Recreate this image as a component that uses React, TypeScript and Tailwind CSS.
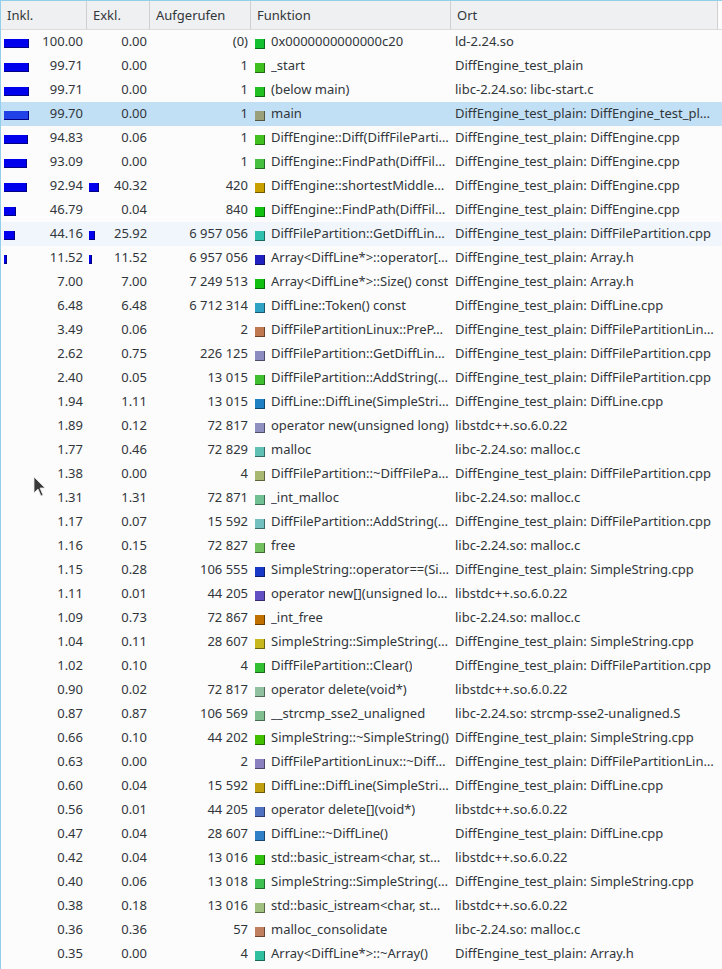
import React from "react";

type Row = {
  incl: number;
  excl: number;
  calls: string;
  fn: string;
  loc: string;
  color: string;
};

const rows: Row[] = [
  { incl: 100.0, excl: 0.0, calls: "(0)", fn: "0x0000000000000c20", loc: "ld-2.24.so", color: "#12c030" },
  { incl: 99.71, excl: 0.0, calls: "1", fn: "_start", loc: "DiffEngine_test_plain", color: "#3fc020" },
  { incl: 99.71, excl: 0.0, calls: "1", fn: "(below main)", loc: "libc-2.24.so: libc-start.c", color: "#22c022" },
  { incl: 99.7, excl: 0.0, calls: "1", fn: "main", loc: "DiffEngine_test_plain: DiffEngine_test_pl…", color: "#9aa07a" },
  { incl: 94.83, excl: 0.06, calls: "1", fn: "DiffEngine::Diff(DiffFileParti…", loc: "DiffEngine_test_plain: DiffEngine.cpp", color: "#42c022" },
  { incl: 93.09, excl: 0.0, calls: "1", fn: "DiffEngine::FindPath(DiffFil…", loc: "DiffEngine_test_plain: DiffEngine.cpp", color: "#46c03e" },
  { incl: 92.94, excl: 40.32, calls: "420", fn: "DiffEngine::shortestMiddle…", loc: "DiffEngine_test_plain: DiffEngine.cpp", color: "#c8a000" },
  { incl: 46.79, excl: 0.04, calls: "840", fn: "DiffEngine::FindPath(DiffFil…", loc: "DiffEngine_test_plain: DiffEngine.cpp", color: "#12c012" },
  { incl: 44.16, excl: 25.92, calls: "6 957 056", fn: "DiffFilePartition::GetDiffLin…", loc: "DiffEngine_test_plain: DiffFilePartition.cpp", color: "#30c0b0" },
  { incl: 11.52, excl: 11.52, calls: "6 957 056", fn: "Array<DiffLine*>::operator[…", loc: "DiffEngine_test_plain: Array.h", color: "#2020c0" },
  { incl: 7.0, excl: 7.0, calls: "7 249 513", fn: "Array<DiffLine*>::Size() const", loc: "DiffEngine_test_plain: Array.h", color: "#12c012" },
  { incl: 6.48, excl: 6.48, calls: "6 712 314", fn: "DiffLine::Token() const", loc: "DiffEngine_test_plain: DiffLine.cpp", color: "#30a2c4" },
  { incl: 3.49, excl: 0.06, calls: "2", fn: "DiffFilePartitionLinux::PreP…", loc: "DiffEngine_test_plain: DiffFilePartitionLin…", color: "#c07850" },
  { incl: 2.62, excl: 0.75, calls: "226 125", fn: "DiffFilePartition::GetDiffLin…", loc: "DiffEngine_test_plain: DiffFilePartition.cpp", color: "#8c8cc0" },
  { incl: 2.4, excl: 0.05, calls: "13 015", fn: "DiffFilePartition::AddString(…", loc: "DiffEngine_test_plain: DiffFilePartition.cpp", color: "#40c030" },
  { incl: 1.94, excl: 1.11, calls: "13 015", fn: "DiffLine::DiffLine(SimpleStri…", loc: "DiffEngine_test_plain: DiffLine.cpp", color: "#2080c4" },
  { incl: 1.89, excl: 0.12, calls: "72 817", fn: "operator new(unsigned long)", loc: "libstdc++.so.6.0.22", color: "#9090c0" },
  { incl: 1.77, excl: 0.46, calls: "72 829", fn: "malloc", loc: "libc-2.24.so: malloc.c", color: "#60c0b4" },
  { incl: 1.38, excl: 0.0, calls: "4", fn: "DiffFilePartition::~DiffFilePa…", loc: "DiffEngine_test_plain: DiffFilePartition.cpp", color: "#a8b870" },
  { incl: 1.31, excl: 1.31, calls: "72 871", fn: "_int_malloc", loc: "libc-2.24.so: malloc.c", color: "#70c094" },
  { incl: 1.17, excl: 0.07, calls: "15 592", fn: "DiffFilePartition::AddString(…", loc: "DiffEngine_test_plain: DiffFilePartition.cpp", color: "#72c0c0" },
  { incl: 1.16, excl: 0.15, calls: "72 827", fn: "free", loc: "libc-2.24.so: malloc.c", color: "#72c060" },
  { incl: 1.15, excl: 0.28, calls: "106 555", fn: "SimpleString::operator==(Si…", loc: "DiffEngine_test_plain: SimpleString.cpp", color: "#1838c8" },
  { incl: 1.11, excl: 0.01, calls: "44 205", fn: "operator new[](unsigned lo…", loc: "libstdc++.so.6.0.22", color: "#6050c4" },
  { incl: 1.09, excl: 0.73, calls: "72 867", fn: "_int_free", loc: "libc-2.24.so: malloc.c", color: "#c07000" },
  { incl: 1.04, excl: 0.11, calls: "28 607", fn: "SimpleString::SimpleString(…", loc: "DiffEngine_test_plain: SimpleString.cpp", color: "#c8b820" },
  { incl: 1.02, excl: 0.1, calls: "4", fn: "DiffFilePartition::Clear()", loc: "DiffEngine_test_plain: DiffFilePartition.cpp", color: "#32c032" },
  { incl: 0.9, excl: 0.02, calls: "72 817", fn: "operator delete(void*)", loc: "libstdc++.so.6.0.22", color: "#90c0a0" },
  { incl: 0.87, excl: 0.87, calls: "106 569", fn: "__strcmp_sse2_unaligned", loc: "libc-2.24.so: strcmp-sse2-unaligned.S", color: "#80c090" },
  { incl: 0.66, excl: 0.1, calls: "44 202", fn: "SimpleString::~SimpleString()", loc: "DiffEngine_test_plain: SimpleString.cpp", color: "#42c000" },
  { incl: 0.63, excl: 0.0, calls: "2", fn: "DiffFilePartitionLinux::~Diff…", loc: "DiffEngine_test_plain: DiffFilePartitionLin…", color: "#8a80c0" },
  { incl: 0.6, excl: 0.04, calls: "15 592", fn: "DiffLine::DiffLine(SimpleStri…", loc: "DiffEngine_test_plain: DiffLine.cpp", color: "#c0a010" },
  { incl: 0.56, excl: 0.01, calls: "44 205", fn: "operator delete[](void*)", loc: "libstdc++.so.6.0.22", color: "#5070c0" },
  { incl: 0.47, excl: 0.04, calls: "28 607", fn: "DiffLine::~DiffLine()", loc: "DiffEngine_test_plain: DiffLine.cpp", color: "#3080c8" },
  { incl: 0.42, excl: 0.04, calls: "13 016", fn: "std::basic_istream<char, st…", loc: "libstdc++.so.6.0.22", color: "#30c010" },
  { incl: 0.4, excl: 0.06, calls: "13 018", fn: "SimpleString::SimpleString(…", loc: "DiffEngine_test_plain: SimpleString.cpp", color: "#40c050" },
  { incl: 0.38, excl: 0.18, calls: "13 016", fn: "std::basic_istream<char, st…", loc: "libstdc++.so.6.0.22", color: "#a0c080" },
  { incl: 0.36, excl: 0.36, calls: "57", fn: "malloc_consolidate", loc: "libc-2.24.so: malloc.c", color: "#c08060" },
  { incl: 0.35, excl: 0.0, calls: "4", fn: "Array<DiffLine*>::~Array()", loc: "DiffEngine_test_plain: Array.h", color: "#30c0a0" },
];

const SELECTED = 3;
const HOVER = 8;

// cost bar, 25px == 100%
function Bar({ pct, selected }: { pct: number; selected?: boolean }) {
  if (pct < 10) return <span className="w-[25px] shrink-0" />;
  const w = Math.max(3, Math.round((pct / 100) * 25));
  return (
    <span className="w-[25px] shrink-0 flex items-center">
      <span
        className={`h-[9px] mt-[2px] border-r border-b border-[#000080] ${selected ? "bg-[#2040e8]" : "bg-[#0000ec]"}`}
        style={{ width: w }}
      />
    </span>
  );
}

const fmt = (n: number) => n.toFixed(2);

export default function App() {
  return (
    <div
      className="relative w-[722px] h-[969px] overflow-hidden bg-[#fcfcfc] border-l border-t border-[#93cfea] text-[13px] text-[#31363b]"
      style={{ fontFamily: '"Noto Sans", "Open Sans", sans-serif' }}
    >
      {/* Header */}
      <div className="grid grid-cols-[86px_63px_101px_200px_267px] h-[29px] border-b border-[#dcdcdc]">
        {["Inkl.", "Exkl.", "Aufgerufen", "Funktion", "Ort"].map((h) => (
          <div key={h} className="flex items-center pt-[2px] pl-[6px] bg-[#eff0f1] border-r border-[#cfd0d1]">
            {h}
          </div>
        ))}
      </div>

      {/* Rows */}
      <div className="flex flex-col">
        {rows.map((r, i) => {
          const sel = i === SELECTED;
          return (
            <div
              key={i}
              className={`grid grid-cols-[86px_63px_101px_200px_267px] h-[24px] items-center whitespace-nowrap ${
                sel ? "bg-[#c2e0f5]" : i === HOVER ? "bg-[#f0f6fb]" : ""
              }`}
            >
              <div className="flex items-center pl-[3px] pr-[4px]">
                <Bar pct={r.incl} selected={sel} />
                <span className="ml-auto">{fmt(r.incl)}</span>
              </div>
              <div className="flex items-center pl-[2px] pr-[3px]">
                <Bar pct={r.excl} selected={sel} />
                <span className="ml-auto">{fmt(r.excl)}</span>
              </div>
              <div className="text-right pr-[3px]">{r.calls}</div>
              <div className="flex items-center pl-[4px] overflow-hidden">
                <span
                  className="w-[10px] h-[10px] mt-[3px] shrink-0 border-r border-b border-black/45"
                  style={{ backgroundColor: r.color }}
                />
                <span className="ml-[6px] overflow-hidden">{r.fn}</span>
              </div>
              <div className="pl-[4px] overflow-hidden">{r.loc}</div>
            </div>
          );
        })}
      </div>

      {/* mouse pointer */}
      <svg className="absolute left-[32px] top-[475px]" width="14" height="22" viewBox="0 0 14 22">
        <path d="M1 1 L1 17 L5 13 L8 20 L10 19 L7 12 L12 12 Z" fill="#3a3a3a" stroke="#e8e8e8" strokeWidth="0.8" />
      </svg>
    </div>
  );
}
